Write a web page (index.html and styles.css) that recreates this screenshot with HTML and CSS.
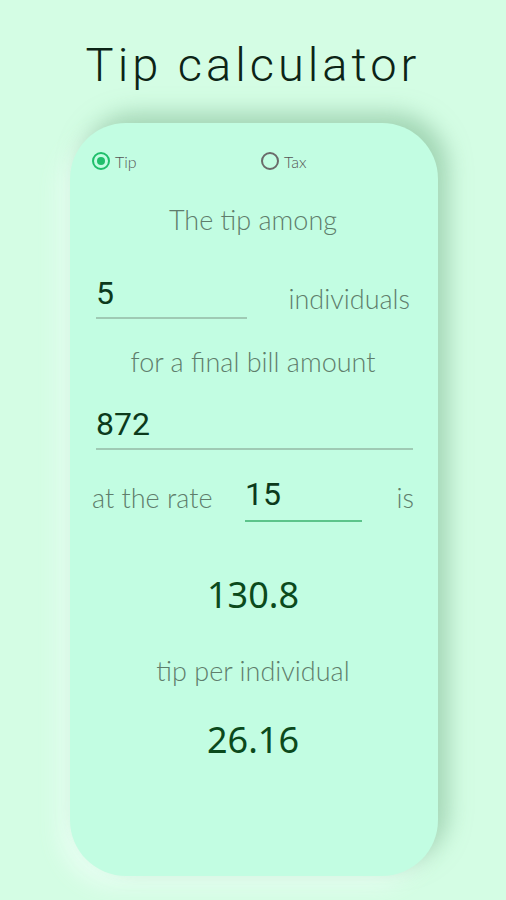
FILE: index.html
```html
<!DOCTYPE html>
<html>
<head>
<meta charset="utf-8">
<link rel="stylesheet" href="styles.css">
</head>
<body>
<h1 class="title">Tip calculator</h1>
<div class="card">
  <div class="radios">
    <label class="radio"><span class="dot on"></span><span class="rlabel">Tip</span></label>
    <label class="radio"><span class="dot"></span><span class="rlabel">Tax</span></label>
  </div>
  <div class="label l1">The tip among</div>
  <div class="row r1">
    <div class="field f-people">5</div>
    <div class="label lind">individuals</div>
  </div>
  <div class="label l2">for a final bill amount</div>
  <div class="row r2">
    <div class="field f-bill">872</div>
  </div>
  <div class="row r3">
    <div class="label">at the rate</div>
    <div class="field f-rate focus">15</div>
    <div class="label">is</div>
  </div>
  <div class="result res1">130.8</div>
  <div class="label l3">tip per individual</div>
  <div class="result res2">26.16</div>
</div>
</body>
</html>
```
FILE: styles.css
```css
html, body {
  margin: 0;
  padding: 0;
}
body {
  background: #d4fde4;
  width: 506px;
  height: 900px;
  overflow: hidden;
  font-family: "Lato", "Liberation Sans", sans-serif;
}
.title {
  margin: 0;
  padding-top: 38px;
  height: 85px;
  box-sizing: border-box;
  text-align: center;
  font-family: "Roboto", sans-serif;
  font-weight: 300;
  font-size: 47px;
  line-height: 54px;
  letter-spacing: 4px;
  color: #0c2416;
}
.card {
  margin: 38px 0 0 70px;
  width: 368px;
  height: 753px;
  box-sizing: border-box;
  padding: 26px 24px 0 22px;
  background: #c2fde2;
  border-radius: 56px;
  box-shadow: 10px -10px 22px rgba(120, 180, 140, 0.55), -10px 10px 22px rgba(235, 255, 245, 0.9);
}
.radios {
  display: flex;
  height: 24px;
  align-items: center;
}
.radio {
  display: flex;
  align-items: center;
  gap: 5px;
}
.radio:first-child {
  width: 169px;
}
.dot {
  width: 18px;
  height: 18px;
  border: 2px solid #6a6a6a;
  border-radius: 50%;
  box-sizing: border-box;
  position: relative;
}
.dot.on {
  border-color: #1fbf6b;
}
.dot.on::after {
  content: "";
  position: absolute;
  left: 3px;
  top: 3px;
  width: 8px;
  height: 8px;
  border-radius: 50%;
  background: #1fbf6b;
}
.rlabel {
  font-size: 16px;
  font-weight: 300;
  color: #555;
}
.label {
  font-weight: 300;
  font-size: 27px;
  color: #5f7d6c;
  line-height: 40px;
}
.l1, .l2, .l3 {
  text-align: center;
  height: 40px;
}
.l1 { margin-top: 27px; }
.row {
  display: flex;
  align-items: center;
}
.r1 {
  margin-top: 30px;
  justify-content: space-between;
  padding-left: 4px;
  padding-right: 4px;
}
.lind {
  position: relative;
  top: 4px;
}
.field {
  font-family: "Roboto", sans-serif;
  font-size: 32px;
  color: #0c3a1c;
  height: 49px;
  line-height: 46px;
  box-sizing: border-box;
  border-bottom: 2px solid #9fcab4;
}
.f-people { width: 151px; }
.l2 { margin-top: 23px; }
.r2 {
  margin-top: 19px;
  padding-left: 4px;
}
.f-bill { width: 317px; }
.r3 {
  margin-top: 23px;
  justify-content: space-between;
}
.f-rate {
  width: 117px;
  margin-left: 8px;
  margin-right: 10px;
  line-height: 42px;
}
.focus { border-bottom-color: #5cc48b; }
.result {
  text-align: center;
  font-family: "Noto Sans", sans-serif;
  font-size: 36px;
  color: #0b4a1c;
  height: 40px;
  line-height: 40px;
}
.res1 { margin-top: 53px; }
.l3 { margin-top: 36px; }
.res2 { margin-top: 29px; }
```
